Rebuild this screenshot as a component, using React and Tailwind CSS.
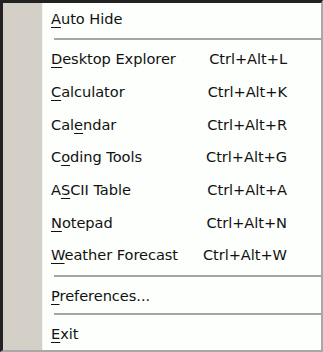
import React from "react";

const U = ({ children }) => <span className="underline underline-offset-[3px] decoration-1">{children}</span>;

const items = [
  { label: <><U>D</U>esktop Explorer</>, key: "Ctrl+Alt+L" },
  { label: <><U>C</U>alculator</>, key: "Ctrl+Alt+K" },
  { label: <>Cal<U>e</U>ndar</>, key: "Ctrl+Alt+R" },
  { label: <>C<U>o</U>ding Tools</>, key: "Ctrl+Alt+G" },
  { label: <>A<U>S</U>CII Table</>, key: "Ctrl+Alt+A" },
  { label: <><U>N</U>otepad</>, key: "Ctrl+Alt+N" },
  { label: <><U>W</U>eather Forecast</>, key: "Ctrl+Alt+W" },
];

const Sep = ({ h = "h-[7px]" }) => (
  <div className={`${h} flex items-center pl-[11px]`}>
    <div className="h-[2px] w-full bg-[#a6a6a6]" />
  </div>
);

const Row = ({ children, k, h = "h-[33px]" }) => (
  <div className={`${h} flex items-center pl-[8px] pr-[34px] justify-between whitespace-nowrap`}>
    <span>{children}</span>
    {k && <span>{k}</span>}
  </div>
);

export default function App() {
  return (
    <div
      className="w-[323px] h-[352px] bg-[#fcfffc] flex border-t-[3px] border-l-[3px] border-r-[2px] border-b-[2px] border-t-[#222] border-l-[#222] border-r-[#a8a8a8] border-b-[#a8a8a8] text-[14.6px] tracking-[-0.05px] text-[#111] overflow-hidden"
      style={{ fontFamily: '"DejaVu Sans", sans-serif' }}
    >
      <div className="w-[40px] shrink-0 bg-[#d4d0c8] border-r border-r-[#f4f4f0]" />
      <div className="flex-1 flex flex-col">
        <Row><U>A</U>uto Hide</Row>
        <Sep />
        {items.map((it, i) => (
          <Row key={i} k={it.key}>{it.label}</Row>
        ))}
        <Sep h="h-[9px]" />
        <Row h="h-[31px]"><U>P</U>references...</Row>
        <Sep h="h-[6px]" />
        <Row><U>E</U>xit</Row>
      </div>
    </div>
  );
}
